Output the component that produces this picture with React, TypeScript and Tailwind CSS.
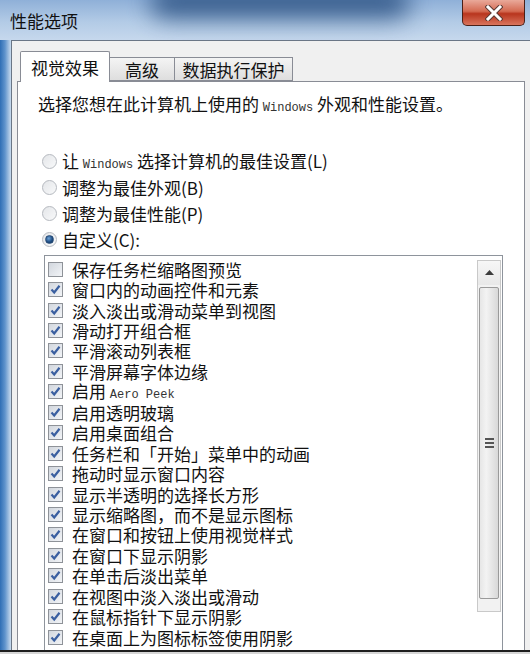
import React from "react";

const cjk = "font-['Noto_Sans_CJK_SC','Noto_Sans',sans-serif]";

const items: { label: React.ReactNode; checked: boolean }[] = [
  { label: "保存任务栏缩略图预览", checked: false },
  { label: "窗口内的动画控件和元素", checked: true },
  { label: "淡入淡出或滑动菜单到视图", checked: true },
  { label: "滑动打开组合框", checked: true },
  { label: "平滑滚动列表框", checked: true },
  { label: "平滑屏幕字体边缘", checked: true },
  { label: <>启用 <Latin>Aero Peek</Latin></>, checked: true },
  { label: "启用透明玻璃", checked: true },
  { label: "启用桌面组合", checked: true },
  { label: "任务栏和「开始」菜单中的动画", checked: true },
  { label: "拖动时显示窗口内容", checked: true },
  { label: "显示半透明的选择长方形", checked: true },
  { label: "显示缩略图，而不是显示图标", checked: true },
  { label: "在窗口和按钮上使用视觉样式", checked: true },
  { label: "在窗口下显示阴影", checked: true },
  { label: "在单击后淡出菜单", checked: true },
  { label: "在视图中淡入淡出或滑动", checked: true },
  { label: "在鼠标指针下显示阴影", checked: true },
  { label: "在桌面上为图标标签使用阴影", checked: true },
];

function Latin({ children }: { children: React.ReactNode }) {
  return (
    <span className="font-['Liberation_Mono',monospace] text-[12px] text-[#333]">
      {children}
    </span>
  );
}

function Radio({ selected }: { selected?: boolean }) {
  return (
    <span className="w-[15px] h-[15px] rounded-full border border-[#b5b9bf] bg-gradient-to-br from-[#e4e6e9] to-[#f8f9fa] flex items-center justify-center shrink-0">
      {selected && (
        <span className="w-[9px] h-[9px] rounded-full bg-[radial-gradient(circle_at_40%_35%,#6fa3d6_0%,#1f4f86_55%,#10304f_100%)] border border-[#2a4d78]" />
      )}
    </span>
  );
}

function Checkbox({ checked }: { checked: boolean }) {
  return (
    <span className="w-[15px] h-[15px] border border-[#8e9298] bg-gradient-to-br from-[#d2d7de] to-[#f2f4f7] flex items-center justify-center shrink-0">
      {checked && (
        <svg width="11" height="11" viewBox="0 0 11 11">
          <path d="M1.5 5.5 L4.2 8.5 L9.5 1.8" fill="none" stroke="#3a5fa0" strokeWidth="2.2" />
        </svg>
      )}
    </span>
  );
}

export default function App() {
  return (
    <div className={`w-[530px] h-[654px] overflow-hidden flex flex-col bg-[#b9cfe8] text-[#111] ${cjk}`}>
      {/* title bar */}
      <div className="relative h-[40px] shrink-0 flex items-center pl-[10px] bg-[linear-gradient(180deg,#8fb0d8_0%,#b3cbe6_55%,#c6d8ed_100%)] overflow-hidden">
        <div className="absolute left-[150px] -top-[14px] w-[260px] h-[32px] rounded-full bg-[#2c5283] blur-[12px] opacity-90" />
        <span className="relative text-[17px] leading-none">性能选项</span>
        <div className="absolute right-[5px] top-0 w-[63px] h-[26px] rounded-b-[5px] border border-t-0 border-[#4a2018] bg-[linear-gradient(180deg,#e9a99a_0%,#d46a52_45%,#b8351e_55%,#d9745c_100%)] flex items-center justify-center">
          <svg width="18" height="16" viewBox="0 0 18 16">
            <path d="M3 2 L15 14 M15 2 L3 14" stroke="#5a3a34" strokeWidth="5" strokeLinecap="square" />
            <path d="M3 2 L15 14 M15 2 L3 14" stroke="#ffffff" strokeWidth="3" strokeLinecap="square" />
          </svg>
        </div>
      </div>

      {/* body */}
      <div className="flex-1 flex min-h-0">
        <div className="w-[11px] shrink-0 bg-[linear-gradient(90deg,#2f6eb5_0%,#5f93cc_45%,#c9dbee_100%)]" />
        <div className="flex-1 flex flex-col bg-[#f0f0f0] border-l border-t border-[#6a7686] pt-[9px] pl-[5px] pr-[5px] min-h-0">
          {/* tabs */}
          <div className="h-[31px] flex items-end pl-[3px] shrink-0">
            <div className="relative z-10 h-[31px] w-[90px] -mb-px bg-white border border-b-0 border-[#898c95] rounded-t-[2px] flex items-center justify-center text-[17px] leading-none">
              视觉效果
            </div>
            <div className="h-[24px] w-[65px] border border-l-0 border-[#898c95] bg-gradient-to-b from-[#f4f4f4] to-[#dedede] flex items-center justify-center text-[17px] leading-none">
              高级
            </div>
            <div className="h-[24px] w-[118px] border border-l-0 border-[#898c95] bg-gradient-to-b from-[#f4f4f4] to-[#dedede] flex items-center justify-center text-[17px] leading-none">
              数据执行保护
            </div>
          </div>

          {/* panel */}
          <div className="flex-1 min-h-0 bg-white border border-b-0 border-[#898c95] pl-[20px] pt-[12px] flex flex-col">
            <p className="text-[17px] leading-[20px]">
              选择您想在此计算机上使用的 <Latin>Windows</Latin> 外观和性能设置。
            </p>

            <div className="mt-[30px] ml-[4px] flex flex-col text-[17px] leading-none">
              <label className="h-[26px] flex items-center gap-[5px]">
                <Radio />
                <span>让 <Latin>Windows</Latin> 选择计算机的最佳设置(L)</span>
              </label>
              <label className="h-[26px] flex items-center gap-[5px]">
                <Radio />
                <span>调整为最佳外观(B)</span>
              </label>
              <label className="h-[26px] flex items-center gap-[5px]">
                <Radio />
                <span>调整为最佳性能(P)</span>
              </label>
              <label className="h-[26px] flex items-center gap-[5px]">
                <Radio selected />
                <span>自定义(C):</span>
              </label>
            </div>

            {/* list box */}
            <div className="mt-[3px] ml-[6px] w-[459px] flex-1 min-h-0 border border-b-0 border-[#8e949c] flex">
              <div className="flex-1 pt-[3px] pl-[3px] flex flex-col">
                {items.map((it, i) => (
                  <div key={i} className="h-[20.45px] flex items-center gap-[9px] text-[17px] leading-none whitespace-nowrap">
                    <Checkbox checked={it.checked} />
                    <span>{it.label}</span>
                  </div>
                ))}
              </div>
              <div className="self-start mt-[4px] mr-[1px] w-[24px] h-[352px] flex flex-col bg-[#f2f2f2] border border-[#c9c9c9]">
                <div className="h-[24px] flex items-center justify-center bg-gradient-to-b from-[#f7f7f7] to-[#e8e8e8]">
                  <svg width="9" height="6" viewBox="0 0 9 6">
                    <path d="M4.5 0 L9 5 L0 5 Z" fill="#3c3c3c" />
                  </svg>
                </div>
                <div className="mx-[1px] mt-[2px] h-[312px] rounded-[2px] border border-[#9a9a9a] bg-[linear-gradient(90deg,#e6e6e6_0%,#f3f3f3_35%,#d8d8d8_100%)] flex items-center justify-center">
                  <div className="flex flex-col gap-[2px]">
                    <span className="w-[9px] h-[2px] bg-[#555]" />
                    <span className="w-[9px] h-[2px] bg-[#555]" />
                    <span className="w-[9px] h-[2px] bg-[#555]" />
                  </div>
                </div>
              </div>
            </div>
          </div>
        </div>
      </div>

      {/* bottom edge */}
      <div className="h-[2px] shrink-0 bg-[#1e1e1e]" />
      <div className="h-[2px] shrink-0 bg-[#d6d6d6]" />
    </div>
  );
}
